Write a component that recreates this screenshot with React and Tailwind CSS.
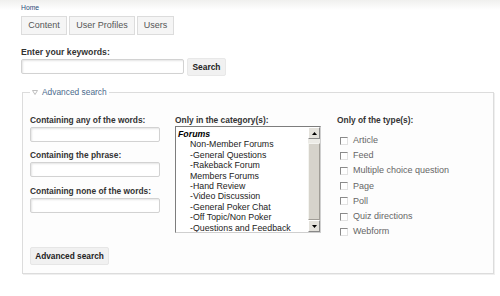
export default function App() {
  const cats = [
    { t: "Non-Member Forums" },
    { t: "-General Questions" },
    { t: "-Rakeback Forum" },
    { t: "Members Forums" },
    { t: "-Hand Review" },
    { t: "-Video Discussion" },
    { t: "-General Poker Chat" },
    { t: "-Off Topic/Non Poker" },
    { t: "-Questions and Feedback" },
  ];
  const types = [
    "Article",
    "Feed",
    "Multiple choice question",
    "Page",
    "Poll",
    "Quiz directions",
    "Webform",
  ];
  const inputCls =
    "block w-full h-[15px] mt-[1px] border border-[#d2d2d2] rounded-[2px] bg-white shadow-[inset_1px_1px_2px_#e4e4e4]";
  const labelCls = "h-[11px] leading-[11px] text-[8.4px] font-bold text-[#333] whitespace-nowrap";
  return (
    <div className="w-[500px] h-[296px] overflow-hidden bg-[linear-gradient(to_bottom,#f0f0ee_0px,#ffffff_10px)] font-['Liberation_Sans',Arial,sans-serif] pl-[21px]">
      <div className="h-[16px] pt-[4px] text-[6.8px] leading-[7px] text-[#2b4a78]">Home</div>
      <div className="flex gap-[2px] h-[19px]">
        <div className="w-[46px] flex items-center justify-center border border-[#dcdcdc] bg-[#f5f5f5] text-[9px] text-[#555]">Content</div>
        <div className="w-[66px] flex items-center justify-center border border-[#dcdcdc] bg-[#f5f5f5] text-[9px] text-[#555]">User Profiles</div>
        <div className="w-[37px] flex items-center justify-center border border-[#dcdcdc] bg-[#f5f5f5] text-[9px] text-[#555]">Users</div>
      </div>
      <div className="mt-[12px] h-[11px] leading-[11px] text-[8.7px] font-bold text-[#333]">Enter your keywords:</div>
      <div className="flex items-start gap-[3px] h-[18px]">
        <div className="w-[163px] h-[15px] mt-[1px] border border-[#d2d2d2] rounded-[2px] bg-white shadow-[inset_1px_1px_2px_#e4e4e4]" />
        <div className="w-[39px] h-[18px] flex items-center justify-center bg-[#f1f1f1] border border-[#e8e8e8] rounded-[2px] text-[8.4px] font-bold text-[#222]">Search</div>
      </div>
      <div className="relative mt-[16px] ml-[1px] w-[472px] h-[182px] border border-[#dcdcdc] bg-[#fdfdfd] shadow-[1px_1px_0_#efefef]">
        <div className="absolute left-[7px] top-[-6px] h-[11px] flex items-center gap-[4px] bg-white px-[2px]">
          <svg width="6" height="5" viewBox="0 0 6 5">
            <path d="M0.5 0.5 L5.5 0.5 L3 4.5 Z" fill="none" stroke="#b8b8b8" strokeWidth="0.9" />
          </svg>
          <span className="text-[8.4px] leading-[11px] text-[#4b6a8c]">Advanced search</span>
        </div>
        <div className="pt-[21.5px] pl-[7px] flex">
          <div className="w-[130px]">
            {["Containing any of the words:", "Containing the phrase:", "Containing none of the words:"].map((l, i) => (
              <div key={l} className={i < 2 ? "mb-[8.5px]" : ""}>
                <div className={labelCls}>{l}</div>
                <div className={inputCls} />
              </div>
            ))}
          </div>
          <div className="ml-[15px] w-[146px]">
            <div className={labelCls}>Only in the category(s):</div>
            <div className="mt-[0.5px] h-[107px] flex border-t border-l border-t-[#7d7d7d] border-l-[#7d7d7d] border-r border-b border-r-[#cfcfcf] border-b-[#cfcfcf] bg-white">
              <div className="flex-1 pt-[2px] text-[8.8px] leading-[10.4px] text-[#222] whitespace-nowrap overflow-hidden">
                <div className="pl-[2px] font-bold italic text-black">Forums</div>
                {cats.map((c) => (
                  <div key={c.t} className="pl-[14px]">{c.t}</div>
                ))}
              </div>
              <div className="w-[12px] flex flex-col bg-[#ecebe6]">
                <div className="h-[12px] flex items-center justify-center bg-[#e4e2dc] border border-t-white border-l-white border-r-[#888] border-b-[#888]">
                  <svg width="5" height="3" viewBox="0 0 5 3"><path d="M0 3 L2.5 0 L5 3 Z" fill="#000" /></svg>
                </div>
                <div className="h-[4px]" />
                <div className="flex-1 bg-[#d6d3cb] border border-t-[#f4f4f0] border-l-[#f4f4f0] border-r-[#a09d96] border-b-[#a09d96]" />
                <div className="h-[12px] flex items-center justify-center bg-[#e4e2dc] border border-t-white border-l-white border-r-[#888] border-b-[#888]">
                  <svg width="5" height="3" viewBox="0 0 5 3"><path d="M0 0 L2.5 3 L5 0 Z" fill="#000" /></svg>
                </div>
              </div>
            </div>
          </div>
          <div className="ml-[16px]">
            <div className={labelCls}>Only of the type(s):</div>
            <div className="mt-[7.6px]">
              {types.map((t) => (
                <div key={t} className="h-[15.2px] flex items-center pl-[3px]">
                  <div className="w-[8px] h-[8px] bg-white border border-t-[#8a8a8a] border-l-[#8a8a8a] border-r-[#e2e2e2] border-b-[#e2e2e2]" />
                  <span className="ml-[5px] text-[9px] text-[#666] whitespace-nowrap">{t}</span>
                </div>
              ))}
            </div>
          </div>
        </div>
        <div className="mt-[7.5px] ml-[7px] w-[79px] h-[18px] flex items-center justify-center bg-[#f1f1f1] border border-[#e6e6e6] rounded-[2px] text-[8.3px] font-bold text-[#222]">Advanced search</div>
      </div>
    </div>
  );
}
